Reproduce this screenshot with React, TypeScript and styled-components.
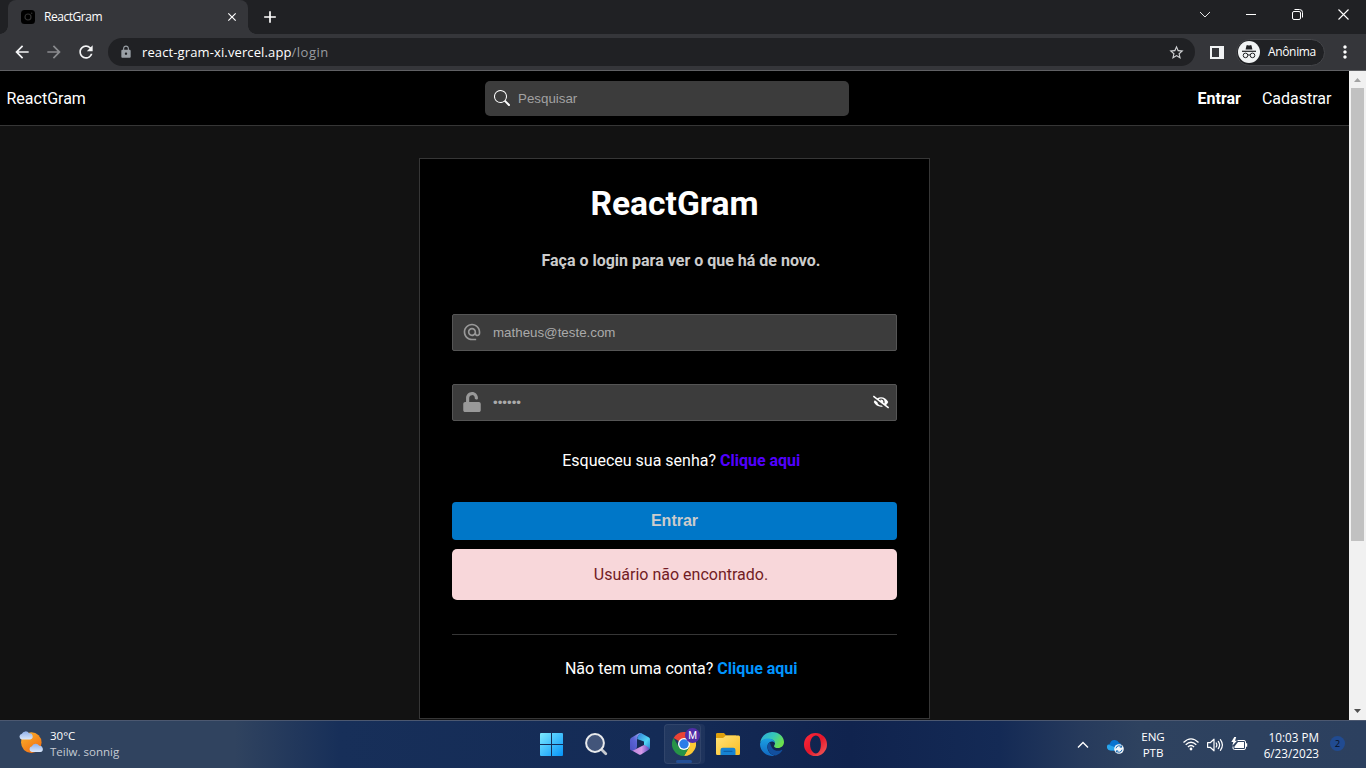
import React from 'react';
import styled, { createGlobalStyle } from 'styled-components';
import { BsSearch } from 'react-icons/bs';
import { MdAlternateEmail, MdLock, MdRefresh, MdArrowBack, MdArrowForward, MdStarBorder, MdMoreVert, MdClose, MdAdd } from 'react-icons/md';
import { FaUnlock, FaEyeSlash } from 'react-icons/fa';

const Global = createGlobalStyle`
  * { box-sizing: border-box; }
  body { margin: 0; background: #121212; overflow: hidden; }
  p, h1, h2 { margin: 0; }
  svg { display: block; flex: none; }
`;

const Screen = styled.div`
  width: 1366px;
  height: 768px;
  display: flex;
  flex-direction: column;
  overflow: hidden;
  font-family: Roboto, 'Liberation Sans', sans-serif;
  color: #fff;
`;

/* ---------- browser ---------- */
const TabStrip = styled.div`
  height: 34px;
  flex: none;
  display: flex;
  background: #202124;
  padding-left: 8px;
`;
const Tab = styled.div`
  position: relative;
  width: 240px;
  height: 34px;
  display: flex;
  align-items: center;
  padding: 0 9px 0 13px;
  background: #35363a;
  border-radius: 8px 8px 0 0;
  font: 12px/16px 'Open Sans', sans-serif;
  letter-spacing: -0.45px;
  &::before, &::after {
    content: '';
    position: absolute;
    bottom: 0;
    width: 8px;
    height: 8px;
  }
  &::before { left: -8px; background: radial-gradient(circle at 0 0, #202124 7.5px, #35363a 8px); }
  &::after { right: -8px; background: radial-gradient(circle at 100% 0, #202124 7.5px, #35363a 8px); }
`;
const TabTitle = styled.span`
  flex: 1;
  margin-left: 9px;
`;
const NewTab = styled.div`
  display: flex;
  align-items: center;
  margin-left: 12px;
  flex: 1;
`;
const WindowButtons = styled.div`
  display: flex;
  width: 184px;
  height: 28px;
  align-items: center;
`;
const WindowButton = styled.span`
  width: 46px;
  display: flex;
  justify-content: center;
`;
const Toolbar = styled.div`
  height: 37px;
  flex: none;
  display: flex;
  align-items: center;
  padding-left: 12px;
  background: #35363a;
  border-bottom: 1px solid #606164;
`;
const NavButton = styled.span<{ $dim?: boolean }>`
  width: 32px;
  color: ${p => (p.$dim ? '#8a8b8e' : '#f4f5f6')};
`;
const AddressBar = styled.div`
  width: 1087px;
  height: 28px;
  border-radius: 14px;
  background: #202124;
  display: flex;
  align-items: center;
  padding: 0 10px 0 11px;
  font: 13px/18px 'Open Sans', sans-serif;
`;
const Url = styled.span`
  flex: 1;
  margin-left: 9px;
  white-space: nowrap;
  letter-spacing: 0.12px;
  color: #fff;
`;
const UrlPath = styled.span`
  color: #999c9f;
  letter-spacing: 0.5px;
`;
const PanelButton = styled.span`
  width: 14px;
  height: 13px;
  margin-left: 15px;
  border: solid #f1f3f4;
  border-width: 2px 5px 2px 2px;
`;
const Profile = styled.div`
  width: 89px;
  height: 27px;
  margin: 0 10px 0 12px;
  border-radius: 14px;
  border: 1px solid #45464a;
  background: #202124;
  display: flex;
  align-items: center;
  gap: 8px;
  padding-left: 1px;
  font: 12px/16px 'Open Sans', sans-serif;
  letter-spacing: -0.35px;
`;

/* ---------- page ---------- */
const Viewport = styled.div`
  height: 649px;
  flex: none;
  display: flex;
  background: #121212;
`;
const Page = styled.div`
  width: 1349px;
  display: flex;
  flex-direction: column;
  align-items: center;
  overflow: hidden;
`;
const SiteHeader = styled.header`
  width: 100%;
  height: 55px;
  flex: none;
  display: grid;
  grid-template-columns: 478.5px 364px 1fr;
  align-items: center;
  padding: 0 17.5px 0 6.5px;
  background: #000;
  border-bottom: 1px solid #363636;
  font-size: 16px;
`;
const Search = styled.div`
  height: 35px;
  border-radius: 5px;
  background: #3c3c3c;
  display: flex;
  align-items: center;
  gap: 8px;
  padding-left: 9px;
  font: 13.33px/15px 'Liberation Sans', sans-serif;
  color: #a2a2a2;
`;
const HeaderNav = styled.nav`
  display: flex;
  justify-content: flex-end;
  gap: 21px;
`;
const NavLink = styled.span<{ $active?: boolean }>`
  font-weight: ${p => (p.$active ? 700 : 400)};
`;
const Card = styled.main`
  width: 511px;
  height: 561px;
  flex: none;
  margin-top: 32px;
  padding: 0 32px;
  border: 1px solid #363636;
  background: #000;
  display: flex;
  flex-direction: column;
  line-height: 20px;
  font-size: 16px;
  text-align: center;
`;
const Title = styled.h1`
  margin-top: 24px;
  font-size: 33.6px;
  line-height: 41px;
`;
const Subtitle = styled.p`
  margin: 27px 0 43px;
  padding-left: 13px;
  font-weight: 700;
  color: #ccc;
`;
const Field = styled.div`
  height: 37px;
  flex: none;
  display: flex;
  align-items: center;
  padding: 0 7px 0 9px;
  border: 1px solid #555;
  border-radius: 2px;
  background: #3c3c3c;
  color: #999;
  & + & { margin-top: 33px; }
  & > svg { margin-bottom: 2px; }
`;
const FieldText = styled.span`
  flex: 1;
  margin-left: 11px;
  text-align: left;
  font: 13.33px/15px 'Liberation Sans', sans-serif;
  color: #aaa;
`;
const Line = styled.p<{ $top: number }>`
  margin-top: ${p => p.$top}px;
  padding-left: 13.5px;
`;
const Link = styled.b<{ $color: string }>`
  color: ${p => p.$color};
`;
const Submit = styled.div`
  height: 38px;
  flex: none;
  margin-top: 31px;
  border-radius: 4px;
  background: #0077c8;
  color: #ccc;
  font: 700 16px/37px 'Liberation Sans', sans-serif;
`;
const ErrorBox = styled.div`
  height: 51px;
  flex: none;
  margin-top: 9px;
  padding-left: 13px;
  border-radius: 5px;
  background: #f8d7da;
  color: #721c24;
  line-height: 51px;
`;
const Divider = styled.div`
  height: 1px;
  flex: none;
  margin-top: 34px;
  background: #363636;
`;
const Scrollbar = styled.div`
  width: 17px;
  background: #f1f1f1;
  display: flex;
  flex-direction: column;
  align-items: center;
`;
const Arrow = styled.span<{ $down?: boolean }>`
  height: 17px;
  width: 17px;
  flex: none;
  display: flex;
  align-items: center;
  justify-content: center;
  color: ${p => (p.$down ? '#505050' : '#a3a3a3')};
  transform: ${p => (p.$down ? 'rotate(180deg)' : 'none')};
`;
const Thumb = styled.div`
  width: 13px;
  height: 453px;
  background: #c1c1c1;
  margin-bottom: auto;
`;

/* ---------- taskbar ---------- */
const Taskbar = styled.footer`
  height: 48px;
  flex: none;
  display: grid;
  grid-template-columns: 529.5px 308.5px 1fr;
  border-top: 1px solid #4c5870;
  background: linear-gradient(90deg, #30435f 0, #30435f 235px, #172f59 340px, #142b56 660px, #10234e 850px, #142a55 1000px, #263a5c 1080px, #2e425f 1140px, #2c405f 1366px);
  font: 12px/16px 'Open Sans', sans-serif;
`;
const Weather = styled.div`
  display: flex;
  padding: 7px 0 0 18px;
  gap: 6px;
`;
const WeatherText = styled.div`
  font-size: 11.5px;
  white-space: nowrap;
`;
const Condition = styled.div`
  color: #c6cbd3;
`;
const Apps = styled.div`
  display: flex;
  align-items: center;
  padding-bottom: 1px;
`;
const AppButton = styled.div<{ $active?: boolean }>`
  position: relative;
  width: 44px;
  height: 40px;
  flex: none;
  display: flex;
  align-items: center;
  justify-content: center;
  ${p => p.$active && `
    &::before {
      content: '';
      position: absolute;
      inset: 0 0 0 2.5px;
      width: 35px;
      border-radius: 4px;
      background: #ffffff10;
      border: 1px solid #ffffff12;
      box-shadow: 4px 0 0 #ffffff0c;
    }
    &::after {
      content: '';
      position: absolute;
      left: 14.5px;
      bottom: 1px;
      width: 16px;
      height: 3px;
      border-radius: 2px;
      background: #234f96;
    }`}
  svg { position: relative; }
`;
const Badge = styled.span`
  position: absolute;
  left: 23.5px;
  top: 4px;
  width: 15px;
  height: 15px;
  border-radius: 50%;
  background: #512da8;
  font: 10px/15px Roboto, sans-serif;
  text-align: center;
`;
const Tray = styled.div`
  display: flex;
  align-items: center;
  padding: 0 20px 0 239px;
`;
const SyncSlot = styled.div`
  margin: 3px 0 0 18px;
`;
const Language = styled.div`
  width: 26px;
  margin: 0 17px 0 16px;
  font-size: 11.6px;
  letter-spacing: -0.1px;
  text-align: center;
`;
const StatusIcons = styled.div`
  display: flex;
  align-items: center;
  gap: 8px;
  & > :last-child { margin-left: -1px; margin-bottom: 2px; }
`;
const Clock = styled.div`
  width: 60px;
  margin-left: auto;
  display: flex;
  flex-direction: column;
  align-items: flex-end;
  font-size: 11.7px;
  white-space: nowrap;
`;
const Notice = styled.span`
  width: 15px;
  height: 15px;
  margin: 0 1px 2px 11px;
  border-radius: 50%;
  background: #214b91;
  color: #07101f;
  font-size: 9.5px;
  line-height: 15px;
  text-align: center;
`;

const Favicon = () => (
  <svg width="14" height="14" viewBox="0 0 14 14">
    <rect width="14" height="14" rx="3.5" fill="#000" />
    <circle cx="7" cy="7" r="3" fill="none" stroke="#333" strokeWidth="1.2" />
    <circle cx="10.7" cy="3.3" r=".7" fill="#333" />
  </svg>
);
const Incognito = () => (
  <svg width="22" height="22" viewBox="0 0 22 22">
    <circle cx="11" cy="11" r="11" fill="#f1f3f4" />
    <path d="M7.600 8.500 8.500 4.600q.2-.7 1-.4l1.500.4 1.500-.4q.8-.3 1 .4l.9 3.900z" fill="#202124" />
    <path d="M4 10.300h14" stroke="#202124" strokeWidth="1.200" />
    <g fill="none" stroke="#202124" strokeWidth="1">
      <circle cx="7.500" cy="14.400" r="2.300" />
      <circle cx="14.500" cy="14.400" r="2.300" />
      <path d="M9.800 14.200q1.200-.8 2.400 0" />
    </g>
  </svg>
);
const ScrollArrow = () => (
  <svg width="7" height="4" viewBox="0 0 7 4"><path d="M0 4 3.500 0 7 4z" fill="currentColor" /></svg>
);
const WeatherIcon = () => (
  <svg width="26" height="26" viewBox="0 0 26 26">
    <defs>
      <linearGradient id="sun" x1="0" y1="0" x2=".7" y2="1"><stop stopColor="#fbb52c" /><stop offset="1" stopColor="#f26f13" /></linearGradient>
      <linearGradient id="cloud" x1="0" y1="0" x2="0" y2="1"><stop stopColor="#8fb0ea" /><stop offset="1" stopColor="#dbe8fb" /></linearGradient>
    </defs>
    <circle cx="13.300" cy="14.600" r="10.300" fill="url(#sun)" />
    <path d="M3.800 11.500a2.900 2.900 0 0 1 .1-5.700A4 4 0 0 1 11 5.300a3.100 3.100 0 0 1 1.100 6.200z" fill="url(#cloud)" />
    <path d="M13.800 24a2.900 2.900 0 0 1 .1-5.700 4 4 0 0 1 7.300-.5 3.100 3.100 0 0 1 1 6.200z" fill="url(#cloud)" />
  </svg>
);
const WindowsIcon = () => (
  <svg width="23" height="23" viewBox="0 0 23 23">
    <defs><linearGradient id="win" gradientUnits="userSpaceOnUse" x1="0" y1="0" x2="23" y2="23"><stop stopColor="#7deaff" /><stop offset="1" stopColor="#0594f8" /></linearGradient></defs>
    <path d="M1 0h10v11H0V1q0-1 1-1zM12 0h10q1 0 1 1v10H12zM0 12h11v11H1q-1 0-1-1zM12 12h11v10q0 1-1 1H12z" fill="url(#win)" />
  </svg>
);
const TaskSearch = () => (
  <svg width="24" height="24" viewBox="0 0 24 24">
    <path d="m17 17 4.800 4.800" stroke="#c5c9cf" strokeWidth="2.800" strokeLinecap="round" />
    <circle cx="11" cy="11" r="8.900" fill="#42557a" stroke="#e8eaec" strokeWidth="2" />
  </svg>
);
const OfficeIcon = () => (
  <svg width="22" height="24" viewBox="0 0 22 24">
    <defs>
      <linearGradient id="o1" x1="1" y1="0" x2="0" y2="1"><stop stopColor="#a9b6ff" /><stop offset=".5" stopColor="#5b64d5" /><stop offset="1" stopColor="#4a4fc0" /></linearGradient>
      <linearGradient id="o2" x1="0" y1="0" x2="1" y2="1"><stop stopColor="#317bd8" /><stop offset=".6" stopColor="#50d7f5" /><stop offset="1" stopColor="#287cd1" /></linearGradient>
      <linearGradient id="o3" x1="0" y1="0" x2="1" y2="0"><stop stopColor="#ba7fd5" /><stop offset=".6" stopColor="#d59be9" /><stop offset="1" stopColor="#624fc4" /></linearGradient>
    </defs>
    <path d="M12.500 1Q8 3 8 8v6q0 3-3 4.500-2 1-4-1V8q0-1.500 1.300-2.300L9.500 1.500Q11 .7 12.500 1z" fill="url(#o1)" />
    <path d="M12 1 20 5.500q1 .6 1 2V15q0 2-1.200 2.800Q19 15 15 13.200V9.500L8.200 7Q8.500 2.500 12 1z" fill="url(#o2)" />
    <path d="M1.200 17.500Q4 19.500 7 17l8-4q4.500 1.500 5 3.500.2 1-1 1.700l-6.500 4q-1.500 1-3 0l-7-4z" fill="url(#o3)" />
  </svg>
);
const ChromeIcon = () => (
  <svg width="24" height="24" viewBox="0 0 24 24">
    <path d="M12 12 1.600 6A12 12 0 0 1 22.400 6z" fill="#e94335" />
    <path d="M12 6h10.400A12 12 0 0 1 12 24l5.200-9z" fill="#fcc934" />
    <path d="M1.600 6A12 12 0 0 0 12 24l5.200-9H6.800z" fill="#269447" />
    <circle cx="12" cy="12" r="6" fill="#fff" />
    <circle cx="12" cy="12" r="4.700" fill="#2c7de9" />
  </svg>
);
const FolderIcon = () => (
  <svg width="24" height="22" viewBox="0 0 24 22">
    <defs><linearGradient id="fold" x1="0" y1="0" x2="1" y2="1"><stop stopColor="#ffe37a" /><stop offset="1" stopColor="#fabd22" /></linearGradient></defs>
    <path d="M0 6V1.300Q0 0 1.300 0H8l2.200 2.500H20V7z" fill="#dfa00c" />
    <path d="M0 5h7l3-2.500h12.700Q24 2.500 24 4v16.500q0 1.500-1.300 1.500H1.300Q0 22 0 20.500z" fill="url(#fold)" />
    <path d="M4.500 22v-5q0-2.200 2.200-2.200h10.600q2.200 0 2.200 2.200v5z" fill="#1683d3" />
    <path d="M8 18.300h8" stroke="#0c62ab" strokeWidth="1.200" strokeLinecap="round" />
  </svg>
);
const EdgeIcon = () => (
  <svg width="24" height="24" viewBox="0 0 24 24">
    <defs>
      <linearGradient id="e1" x1="0" y1="0" x2="1" y2=".5"><stop stopColor="#2ba7e0" /><stop offset=".55" stopColor="#36c8b8" /><stop offset="1" stopColor="#6be04d" /></linearGradient>
      <linearGradient id="e2" x1="0" y1="0" x2="0" y2="1"><stop stopColor="#1aa0e2" /><stop offset="1" stopColor="#1268c2" /></linearGradient>
    </defs>
    <path d="M.2 10.500C1.100 4.300 6.100 0 12.100 0 19 0 24 4.800 24 10c0 3.700-2.800 6-6 6-2.600 0-4-1-4-1.800 0-.7 1-1.200 1-2.900 0-2.500-2.600-4.400-6-4.400C4.600 6.900 1.500 8.500.2 10.500z" fill="url(#e1)" />
    <path d="M0 12c.4-3.700 4.200-5.600 8.200-5.600 4.100 0 6.800 2.200 6.800 4.900-.7-1.300-2-1.900-3.300-1.700-3 .4-4.700 3-4.300 6.200.4 3.700 3.200 6.800 7.200 7.900C6.700 25.200 0 19.300 0 12z" fill="url(#e2)" />
    <path d="M10 10.200c-2.500 1.200-3 4.200-2 7 1.200 3.500 4.200 6.200 7.800 6.200 3-1 5-2.700 6.400-4.900.3-.5-.2-.9-.7-.6-5.300 2.500-10.400-.2-11.500-7.700z" fill="#124f9e" />
  </svg>
);
const OperaIcon = () => (
  <svg width="23" height="23" viewBox="0 0 23 23">
    <defs><linearGradient id="op" x1="0" y1="0" x2="1" y2="1"><stop stopColor="#ff2a3b" /><stop offset=".5" stopColor="#e5162b" /><stop offset="1" stopColor="#f0645f" /></linearGradient></defs>
    <path fillRule="evenodd" d="M11.500 0a11.500 11.500 0 1 0 0 23 11.500 11.500 0 1 0 0-23zm.4 2.600c3.100 0 5 4 5 8.900s-1.900 8.900-5 8.900-5.800-4-5.800-8.900 2.700-8.900 5.800-8.900z" fill="url(#op)" />
  </svg>
);
const CloudSync = () => (
  <svg width="17" height="15" viewBox="0 0 17 15">
    <path d="M4 11.500A3.700 3.700 0 0 1 3 4.500 4.800 4.800 0 0 1 12 3.700a3.600 3.600 0 0 1 2.500 3.700L11 11.500z" fill="#0874d0" />
    <path d="m1 5.500 9 3.500-2 2.500H3.700A3.500 3.500 0 0 1 1 5.500z" fill="#29a5ec" />
    <circle cx="12" cy="10" r="4.800" fill="#f4f7fa" />
    <path d="M9 9.300a3.100 3.100 0 0 1 5.600-1.200V6.500m0 1.600h-1.800M15 10.700a3.100 3.100 0 0 1-5.600 1.200v1.500m0-1.500h1.800" fill="none" stroke="#1769b0" />
  </svg>
);
const Wifi = () => (
  <svg width="16" height="13" viewBox="0 0 16 13" fill="none" stroke="#fff" strokeWidth="1.300">
    <path d="M.5 4.500Q8-2.800 15.500 4.500M2.700 6.800q5.300-5 10.600 0M4.900 9q3.100-2.900 6.200 0" />
    <circle cx="8" cy="11" r="1.400" fill="#fff" stroke="none" />
  </svg>
);
const Speaker = () => (
  <svg width="17" height="14" viewBox="0 0 17 14" fill="none" stroke="#fff" strokeWidth="1.200" strokeLinejoin="round" strokeLinecap="round">
    <path d="M.6 4.700h2.600L7 1.200v11.600L3.200 9.300H.6zM9.200 5q1.300 2 0 4M11.300 3.400q2.600 3.600 0 7.200M13.400 1.700q4 5.300 0 10.600" />
  </svg>
);
const Battery = () => (
  <svg width="17" height="14" viewBox="0 0 17 14">
    <path d="M6.500 3.500H13q1.500 0 1.500 1.500v6q0 1.500-1.500 1.500H3.500Q2 12.500 2 11V9.500" fill="none" stroke="#fff" />
    <path d="M7 5h6v6H3.500V9.500zM15 6.300h1.200v3.400H15zM3.300 0 .3 5h2L1.300 8.800 6 3.700H4L5.200 0z" fill="#fff" />
  </svg>
);

export default function App() {
  return (
    <Screen>
      <Global />
      <TabStrip>
        <Tab>
          <Favicon />
          <TabTitle>ReactGram</TabTitle>
          <MdClose size={14} />
        </Tab>
        <NewTab><MdAdd size={20} /></NewTab>
        <WindowButtons>
          <WindowButton><svg width="12" height="7" viewBox="0 0 12 7"><path d="m1 1 5 5 5-5" fill="none" stroke="#e4e5e6" /></svg></WindowButton>
          <WindowButton><svg width="10" height="1"><path d="M0 .5h10" stroke="#fff" /></svg></WindowButton>
          <WindowButton>
            <svg width="11" height="11" viewBox="0 0 11 11" fill="none" stroke="#fff">
              <rect x=".5" y="2.500" width="8" height="8" rx="1.500" />
              <path d="M2.500.5h5q3 0 3 3v5" />
            </svg>
          </WindowButton>
          <WindowButton><svg width="11" height="11" viewBox="0 0 11 11"><path d="m.5.5 10 10m0-10-10 10" stroke="#fff" strokeWidth="1.100" /></svg></WindowButton>
        </WindowButtons>
      </TabStrip>
      <Toolbar>
        <NavButton><MdArrowBack size={20} /></NavButton>
        <NavButton $dim><MdArrowForward size={20} /></NavButton>
        <NavButton><MdRefresh size={20} /></NavButton>
        <AddressBar>
          <MdLock size={14} color="#9aa0a6" />
          <Url>react-gram-xi.vercel.app<UrlPath>/login</UrlPath></Url>
          <MdStarBorder size={17} color="#cfd1d3" />
        </AddressBar>
        <PanelButton />
        <Profile><Incognito />Anônima</Profile>
        <MdMoreVert size={20} />
      </Toolbar>

      <Viewport>
        <Page>
          <SiteHeader>
            <span>ReactGram</span>
            <Search><BsSearch size={16} color="#fff" />Pesquisar</Search>
            <HeaderNav>
              <NavLink $active>Entrar</NavLink>
              <NavLink>Cadastrar</NavLink>
            </HeaderNav>
          </SiteHeader>
          <Card>
            <Title>ReactGram</Title>
            <Subtitle>Faça o login para ver o que há de novo.</Subtitle>
            <Field><MdAlternateEmail size={20} /><FieldText>matheus@teste.com</FieldText></Field>
            <Field>
              <FaUnlock size={20} />
              <FieldText>••••••</FieldText>
              <FaEyeSlash size={16} color="#fff" />
            </Field>
            <Line $top={30}>Esqueceu sua senha? <Link $color="#5200ff">Clique aqui</Link></Line>
            <Submit>Entrar</Submit>
            <ErrorBox>Usuário não encontrado.</ErrorBox>
            <Divider />
            <Line $top={24}>Não tem uma conta? <Link $color="#0095ff">Clique aqui</Link></Line>
          </Card>
        </Page>
        <Scrollbar>
          <Arrow><ScrollArrow /></Arrow>
          <Thumb />
          <Arrow $down><ScrollArrow /></Arrow>
        </Scrollbar>
      </Viewport>

      <Taskbar>
        <Weather>
          <WeatherIcon />
          <WeatherText>30°C<Condition>Teilw. sonnig</Condition></WeatherText>
        </Weather>
        <Apps>
          <AppButton><WindowsIcon /></AppButton>
          <AppButton><TaskSearch /></AppButton>
          <AppButton><OfficeIcon /></AppButton>
          <AppButton $active><ChromeIcon /><Badge>M</Badge></AppButton>
          <AppButton><FolderIcon /></AppButton>
          <AppButton><EdgeIcon /></AppButton>
          <AppButton><OperaIcon /></AppButton>
        </Apps>
        <Tray>
          <svg width="12" height="8" viewBox="0 0 12 8"><path d="m1 6.500 5-5 5 5" fill="none" stroke="#fff" strokeWidth="1.400" /></svg>
          <SyncSlot><CloudSync /></SyncSlot>
          <Language>ENG<br />PTB</Language>
          <StatusIcons>
            <Wifi />
            <Speaker />
            <Battery />
          </StatusIcons>
          <Clock><span>10:03 PM</span><span>6/23/2023</span></Clock>
          <Notice>2</Notice>
        </Tray>
      </Taskbar>
    </Screen>
  );
}
